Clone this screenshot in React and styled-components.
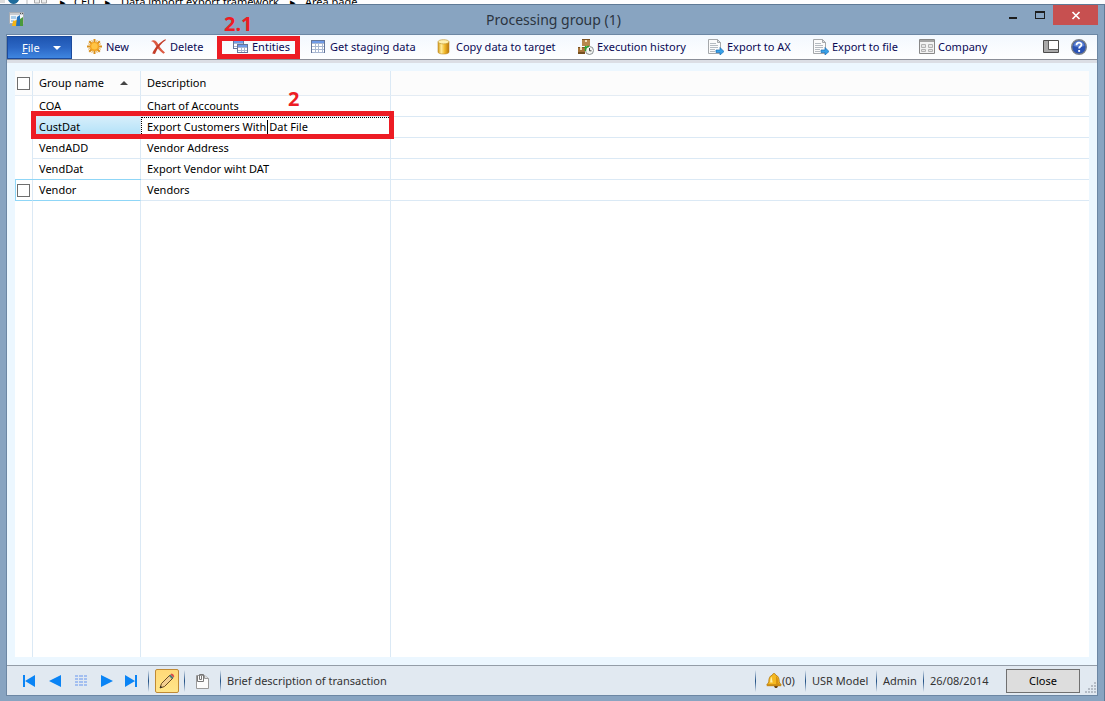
import React from "react";
import styled, { createGlobalStyle, css } from "styled-components";

const Global = createGlobalStyle`
  * { box-sizing: border-box; }
  body { margin: 0; background: #88a4c1; }
  body, button, input { font-family: "Noto Sans", "Open Sans", sans-serif; font-size: 11px; line-height: 16px; }
`;

const Page = styled.div`
  display: flex;
  flex-direction: column;
  min-height: 100vh;
`;

const Backdrop = styled.div`
  display: flex;
  align-items: flex-end;
  height: 4px;
  overflow: hidden;
  background: #fdfdfe;
  color: #000;
  white-space: nowrap;
`;
const Crumb = styled.span`
  flex: none;
  width: ${(p) => p.$w}px;
  height: 16px;
  margin-bottom: -6px;
`;
const BackIcons = styled.svg`
  flex: none;
  width: 60px;
  height: 4px;
`;

const Window = styled.div`
  display: flex;
  flex-direction: column;
  flex: 1;
  border-top: 1px solid #5f7a96;
  border-right: 1px solid #5f7a96;
  background: #88a4c1;
  padding: 0 6px 5px;
`;

const TitleBar = styled.header`
  position: relative;
  display: grid;
  grid-template-columns: 1fr auto 1fr;
  height: 29px;
  padding-left: 3px;
`;
const AppIcon = styled.svg`
  width: 16px;
  height: 16px;
  margin-top: 6px;
`;
const Title = styled.h1`
  margin: 0;
  font-size: 14px;
  line-height: 29px;
  font-weight: 400;
  color: #2b3440;
`;
const WindowButtons = styled.div`
  display: flex;
  justify-content: flex-end;
`;
const WindowButton = styled.button`
  display: flex;
  align-items: center;
  justify-content: center;
  width: ${(p) => (p.$close ? 45 : 27)}px;
  height: 20px;
  padding: 0;
  border: 0;
  background: ${(p) => (p.$close ? "#c75050" : "transparent")};
`;

const Client = styled.main`
  display: flex;
  flex-direction: column;
  flex: 1;
  border: 1px solid #6c87a4;
  background: #ecf7ff;
`;

const Toolbar = styled.nav`
  display: flex;
  align-items: center;
  height: 25px;
  padding-right: 10px;
  border-bottom: 1px solid #8b8f98;
  background: linear-gradient(#f3f8fe, #ffffff);
  box-shadow: 0 3px 0 #dbdee5;
`;
const FileButton = styled.button`
  display: flex;
  align-items: center;
  gap: 13px;
  align-self: stretch;
  width: 65px;
  margin: 1px 15px 0 0;
  padding: 0 0 0 14px;
  border: 1px solid #1b4a9c;
  background: linear-gradient(#1e55b0, #2b66c4 50%, #3f86e0);
  color: #fff;
  font-size: 11px;
`;
const ToolButton = styled.button`
  position: relative;
  display: flex;
  align-items: center;
  gap: 3px;
  flex: 0 0 auto;
  width: ${(p) => p.$w}px;
  height: 22px;
  padding: 0;
  border: 0;
  background: none;
  color: #0a0a55;
  white-space: nowrap;
`;
const ToolEnd = styled.div`
  display: flex;
  gap: 12px;
  margin-left: auto;
`;
const IconButton = styled.button`
  display: flex;
  width: 16px;
  height: 16px;
  padding: 0;
  border: 0;
  background: none;
`;
const Icon = styled.svg`
  flex: none;
  width: 16px;
  height: 16px;
`;

const Highlight = styled.span`
  position: absolute;
  border: 5px solid #ed1c24;
  pointer-events: none;
  ${(p) =>
    p.$row
      ? css`left: 16px; top: 40px; width: 363px; height: 28px;`
      : css`left: -16px; top: 0; width: 83px; height: 23px;`}
`;
const Callout = styled.span`
  position: absolute;
  left: ${(p) => p.$x}px;
  top: ${(p) => p.$y}px;
  color: #ed1c24;
  font-family: "Noto Sans", "Open Sans", sans-serif;
  font-size: 20px;
  line-height: 20px;
  font-weight: 700;
`;

const Grid = styled.section`
  position: relative;
  flex: 1;
  margin: 11px 8px 8px;
  background:
    linear-gradient(#dbe9f5, #dbe9f5) 17px 0 / 1px 100% no-repeat,
    linear-gradient(#dbe9f5, #dbe9f5) 125px 0 / 1px 100% no-repeat,
    linear-gradient(#dbe9f5, #dbe9f5) 375px 0 / 1px 100% no-repeat,
    #fff;
`;
const Table = styled.table`
  width: 100%;
  table-layout: fixed;
  border-collapse: separate;
  border-spacing: 0;
  color: #000;
`;
const Col = styled.col`
  width: ${(p) => p.$w}px;
`;
const Head = styled.th`
  height: 25px;
  padding: 0 0 0 ${(p) => (p.$tick ? 2 : 6)}px;
  border-bottom: 1px solid #e4ecf4;
  border-right: ${(p) => (p.$last ? "0" : "1px solid #dbe9f5")};
  background: #fcfcfc;
  font-weight: 400;
  text-align: left;
`;
const SortLabel = styled.span`
  display: flex;
  align-items: center;
  gap: 16px;
`;
const Cell = styled.td`
  height: 21px;
  padding: 0 0 0 ${(p) => (p.$tick ? (p.$current ? 1 : 2) : 6)}px;
  border-bottom: 1px solid ${(p) => (p.$current ? "#8fd6f7" : p.$tick ? "transparent" : "#dbe9f5")};
  border-right: ${(p) => (p.$last ? "0" : "1px solid #dbe9f5")};
  white-space: nowrap;
  ${(p) => p.$tick && p.$current && css`border-left: 1px solid #8fd6f7;`}
  ${(p) => p.$current && css`box-shadow: 0 -1px 0 #8fd6f7;`}
  ${(p) => p.$selected && css`background: linear-gradient(#d6eefb, #aee0f8);`}
  ${(p) => p.$editing && css`position: relative; outline: 1px dotted #000; outline-offset: -1px;`}
`;
const Tick = styled.input`
  appearance: none;
  display: block;
  width: 13px;
  height: 13px;
  margin: 0;
  border: 1px solid #6e6e6e;
  background: #fff;
`;
const CellInput = styled.input`
  display: block;
  width: 95%;
  height: 16px;
  padding: 0;
  border: 0;
  outline: 0;
  background: none;
  color: #000;
`;
const Caret = styled.span`
  position: absolute;
  left: 126px;
  top: 3px;
  width: 1px;
  height: 15px;
  background: #000;
`;

const StatusBar = styled.footer`
  display: flex;
  align-items: center;
  height: 30px;
  border-top: 1px solid #949da8;
  background: #e1e9f1;
  color: #333;
  white-space: nowrap;
`;
const Navigation = styled.div`
  display: flex;
  gap: 10px;
  width: 141px;
  padding-left: 14px;
`;
const Separator = styled.span`
  flex: none;
  width: 1px;
  height: 22px;
  background: linear-gradient(#e1e9f1, #1d4e84 50%, #e1e9f1);
`;
const EditButton = styled.button`
  display: flex;
  align-items: center;
  justify-content: center;
  width: 24px;
  height: 24px;
  margin: 0 5px 0 6px;
  padding: 0;
  border: 1px solid #c08a34;
  border-radius: 2px;
  background: linear-gradient(#ffd977, #ffe58a);
`;
const AttachButton = styled(IconButton)`
  margin: 0 10px 0 9px;
`;
const StatusText = styled.span`
  width: ${(p) => (p.$w ? p.$w + "px" : "auto")};
  flex: ${(p) => (p.$grow ? "1" : "none")};
  padding-left: 6px;
`;
const Alerts = styled.button`
  display: flex;
  align-items: center;
  width: 49px;
  padding: 0 0 0 10px;
  border: 0;
  background: none;
  color: #333;
`;
const CloseButton = styled.button`
  width: 74px;
  height: 24px;
  margin: 0 4px 0 0;
  padding: 0;
  border: 1px solid #707070;
  background: #dddddd;
  color: #000;
`;
const Grip = styled.svg`
  align-self: flex-end;
  width: 13px;
  height: 13px;
  margin-bottom: 1px;
`;

const NewIcon = () => (
  <Icon viewBox="0 0 16 16" aria-hidden="true">
    <path d="M7.500 0v15M0 7.500h15M2.200 2.200l10.600 10.600M12.800 2.200L2.200 12.800" stroke="#d9901c" strokeWidth="2" />
    <path d="M4.700 1l5.600 13M10.300 1L4.700 14M1 4.700l13 5.600M14 4.700L1 10.300" stroke="#e5a83f" strokeWidth=".8" />
    <circle cx="7.500" cy="7.500" r="4.600" fill="#f5a31f" />
    <circle cx="7.500" cy="7.300" r="3.200" fill="#ffc445" />
  </Icon>
);
const DeleteIcon = () => (
  <Icon viewBox="0 0 16 16" aria-hidden="true">
    <path d="M0 2.300C2 .4 4.500 1 6 3.300c2 3.500 4 7 8 10.200l-1.600 1.300C8.500 12 6 8.500 4 5.300 3 3.600 2 2.600 0 2.300z" fill="#dc5a42" />
    <path d="M15 1C10.500 4 6.500 8.500 4 15l-2.700-.6C4 8 9 2.800 14.500.2z" fill="#c43c28" />
  </Icon>
);
const TableShape = ({ x, y, w, h, rows, cols }) => (
  <g>
    <rect x={x + 0.5} y={y + 0.5} width={w - 1} height={h - 1} fill="#fff" stroke="#64759a" />
    <rect x={x + 1} y={y + 1} width={w - 2} height="2" fill="#6f9be8" />
    {Array.from({ length: cols - 1 }, (_, i) => (
      <rect key={"c" + i} x={x + Math.round(((i + 1) * w) / cols)} y={y + 3} width="1" height={h - 4} fill="#a9b8d2" />
    ))}
    {Array.from({ length: rows }, (_, i) => (
      <rect key={"r" + i} x={x + 1} y={y + 3 + i * 3} width={w - 2} height="1" fill="#a9b8d2" />
    ))}
  </g>
);
const EntitiesIcon = () => (
  <Icon viewBox="0 0 16 16" aria-hidden="true">
    <TableShape x={0} y={1} w={11} h={9} rows={2} cols={3} />
    <TableShape x={4} y={5} w={11} h={9} rows={2} cols={3} />
  </Icon>
);
const StagingIcon = () => (
  <Icon viewBox="0 0 16 16" aria-hidden="true">
    <TableShape x={0} y={1} w={14} h={13} rows={4} cols={4} />
  </Icon>
);
const CylinderIcon = () => (
  <Icon viewBox="0 0 16 16" aria-hidden="true">
    <defs>
      <linearGradient id="gold">
        <stop offset="0" stopColor="#d39a16" />
        <stop offset=".3" stopColor="#ffec9b" />
        <stop offset=".6" stopColor="#f2bb2c" />
        <stop offset="1" stopColor="#b87508" />
      </linearGradient>
    </defs>
    <path d="M1 3v10c0 1.400 2.500 2 5.500 2s5.500-.6 5.500-2V3z" fill="url(#gold)" stroke="#c08a28" strokeWidth=".6" />
    <ellipse cx="6.500" cy="2.800" rx="5.500" ry="2.100" fill="#fff1b0" stroke="#c39a34" strokeWidth=".7" />
  </Icon>
);
const HistoryIcon = () => (
  <Icon viewBox="0 0 16 16" aria-hidden="true">
    <rect x="4" y="0" width="8" height="7" fill="#b8884c" />
    <rect x="7" y="0" width="2" height="3" fill="#f2dfbc" />
    <path d="M0 8h7v7H0z" fill="#a87538" />
    <path d="M0 8h7v1H0zM4 0h8v1H4z" fill="#7b5222" />
    <rect x="2" y="8" width="2" height="3" fill="#f2dfbc" />
    <path d="M0 13h7v2H0z" fill="#76501f" />
    <circle cx="11.500" cy="11.500" r="4" fill="#f3f6f3" stroke="#888e90" />
    <path d="M11.500 9v2.800h2" fill="none" stroke="#444" />
    <path d="M7.500 12c-.5-3 1-4.500 3.500-4.700" fill="none" stroke="#2ba52c" strokeWidth="1.500" />
    <path d="M6 9h3.500L7.600 6.500z" fill="#2ba52c" />
  </Icon>
);
const ExportIcon = () => (
  <Icon viewBox="0 0 16 16" aria-hidden="true">
    <path d="M.5.5h9l3 3v11H.5z" fill="#fbfbfb" stroke="#a5a8ab" />
    <path d="M9.500.5v3h3z" fill="#dfe2e5" stroke="#a5a8ab" />
    <path d="M2 4.500h6M2 6.500h8M2 8.500h8M2 10.500h5M2 12.500h5" stroke="#b5bbc1" />
    <path d="M8 11h4V8.500l4 4-4 3.500v-2.500H8z" fill="#37a1e8" stroke="#1a6db4" strokeWidth=".7" />
  </Icon>
);
const CompanyIcon = () => (
  <Icon viewBox="0 0 16 16" aria-hidden="true">
    <path d="M.5.5h15v14H.5z" fill="#f3f3f3" stroke="#888" />
    <path d="M1 1h14v2H1z" fill="#a5a5a5" />
    <path d="M2.500 5.500h4v3h-4zM9.500 5.500h4v3h-4zM2.500 10.500h4v2h-4zM9.500 10.500h4v2h-4z" fill="#e6e6e6" stroke="#b2b2b2" />
  </Icon>
);
const LayoutIcon = () => (
  <Icon viewBox="0 0 16 16" aria-hidden="true">
    <path d="M.5 1.500h15v12H.5z" fill="#fff" stroke="#4c4c4c" />
    <path d="M1 2h4v11H1zM1 10h14v3H1z" fill="#a9a9a9" />
    <path d="M5.500 2v8.500H15" fill="none" stroke="#5b5b5b" />
  </Icon>
);
const HelpIcon = () => (
  <Icon viewBox="0 0 16 16" aria-hidden="true">
    <circle cx="8" cy="8" r="7.300" fill="#2a52b4" stroke="#7c8087" strokeWidth="1.400" />
    <path d="M2.500 7a5.500 5 0 0 1 11 0q-5.500 2-11 0z" fill="#5b80d3" />
    <path d="M5.500 6.200c0-3.600 5-3.200 5-.5 0 1.800-2.400 1.900-2.400 3.900" fill="none" stroke="#fff" strokeWidth="1.800" />
    <rect x="7.200" y="11" width="1.900" height="1.900" fill="#fff" />
  </Icon>
);
const BellIcon = () => (
  <Icon viewBox="0 0 16 16" aria-hidden="true">
    <path d="M8 .5c1 0 1.500.6 1.500 1.500 3 .8 3.700 3.500 3.700 7l2 3H.8l2-3c0-3.500.7-6.200 3.700-7C6.500 1.100 7 .5 8 .5z" fill="#f5b921" stroke="#b4780f" strokeWidth=".8" />
    <path d="M5.500 3.800C4.500 5 4.400 7 4.200 9.500h2.500z" fill="#fff0a4" />
    <path d="M10 3c2 1.500 2 4 2.200 6.500l1.600 2H10z" fill="#d9930f" />
    <path d="M.8 11.500h14.400v1.700H.8z" fill="#c98a14" />
    <path d="M8 13h4l-1 2H9z" fill="#6e4510" />
  </Icon>
);

const tools = [
  ["New", NewIcon, 64],
  ["Delete", DeleteIcon, 82],
  ["Entities", EntitiesIcon, 78],
  ["Get staging data", StagingIcon, 126],
  ["Copy data to target", CylinderIcon, 141],
  ["Execution history", HistoryIcon, 130],
  ["Export to AX", ExportIcon, 105],
  ["Export to file", ExportIcon, 106],
  ["Company", CompanyIcon, 80],
];

const groups = [
  { name: "COA", description: "Chart of Accounts" },
  { name: "CustDat", description: "Export Customers With Dat File", selected: true },
  { name: "VendADD", description: "Vendor Address" },
  { name: "VendDat", description: "Export Vendor wiht DAT" },
  { name: "Vendor", description: "Vendors", current: true },
];

const navIcons = [
  ["First record", <path key="p" d="M2 2h2v12H2zM14 2v12L4 8z" fill="#0a84f5" />],
  ["Previous record", <path key="p" d="M14 2v12L2 8z" fill="#0a84f5" />],
  ["Grid view", <path key="p" d="M2 2h3v2H2zM6 2h4v2H6zM11 2h3v2h-3zM2 5h3v2H2zM6 5h4v2H6zM11 5h3v2h-3zM2 8h3v2H2zM6 8h4v2H6zM11 8h3v2h-3zM2 11h3v2H2zM6 11h4v2H6zM11 11h3v2h-3z" fill="#a3bff0" />],
  ["Next record", <path key="p" d="M2 2v12l12-6z" fill="#0a84f5" />],
  ["Last record", <path key="p" d="M10 2h2v12h-2zM0 2v12l10-6z" fill="#0a84f5" />],
];

export default function App() {
  return (
    <Page>
      <Global />
      <Backdrop aria-hidden="true">
        <BackIcons viewBox="0 0 60 4">
          <path d="M0 0h5v3H0z" fill="#ddd" />
          <path d="M8 0h11q-2 4-5.500 4T8 0z" fill="#1f6c9c" />
          <path d="M27 0v4" stroke="#bbb" />
          <path d="M34.500-2h5v5h-5zM41.500-2h5v5h-5z" fill="#eee" stroke="#aaa" />
        </BackIcons>
        <Crumb $w={14}>▸</Crumb>
        <Crumb $w={31}>CEU</Crumb>
        <Crumb $w={16}>▸</Crumb>
        <Crumb $w={169}>Data import export framework</Crumb>
        <Crumb $w={15}>▸</Crumb>
        <Crumb $w={60}>Area page</Crumb>
      </Backdrop>
      <Window>
        <TitleBar>
          <AppIcon viewBox="0 0 16 16" aria-hidden="true">
            <path d="M.5 1.500h14v11H.5z" fill="#f4f6f8" stroke="#a7adb4" />
            <path d="M1 2h13v2H1z" fill="#c9ccd0" />
            <path d="M11 2h1v1h-1zM13 2h1v1h-1z" fill="#555" />
            <path d="M2 5h5v3H2zM2 9h3v2H2z" fill="#a9cdea" />
            <path d="M4 10l4-1v6H3z" fill="#f5b313" />
            <path d="M8 6l3-2v11H7z" fill="#2372bd" />
            <path d="M11 8l3-2v9h-3z" fill="#4a9a3c" />
          </AppIcon>
          <Title>Processing group (1)</Title>
          <WindowButtons>
            <WindowButton aria-label="Minimize">
              <Icon viewBox="0 0 16 16"><path d="M4 10h8v2H4z" fill="#1d1d1d" /></Icon>
            </WindowButton>
            <WindowButton aria-label="Maximize">
              <Icon viewBox="0 0 16 16"><path d="M3 4h10v8H3zM4 6v5h8V6z" fillRule="evenodd" fill="#1d1d1d" /></Icon>
            </WindowButton>
            <WindowButton $close aria-label="Close window">
              <Icon viewBox="0 0 16 16"><path d="M4.500 5l7 7M11.500 5l-7 7" stroke="#fff" strokeWidth="1.700" /></Icon>
            </WindowButton>
          </WindowButtons>
          <Callout $x={218} $y={9}>2.1</Callout>
        </TitleBar>
        <Client>
          <Toolbar>
            <FileButton>
              <span><u>F</u>ile</span>
              <svg width="8" height="4" viewBox="0 0 8 4" aria-hidden="true"><path d="M0 0h8L4 4z" fill="#fff" /></svg>
            </FileButton>
            {tools.map(([label, Glyph, width]) => (
              <ToolButton key={label} $w={width}>
                <Glyph />
                {label}
                {label === "Entities" && <Highlight />}
              </ToolButton>
            ))}
            <ToolEnd>
              <IconButton aria-label="Layout"><LayoutIcon /></IconButton>
              <IconButton aria-label="Help"><HelpIcon /></IconButton>
            </ToolEnd>
          </Toolbar>
          <Grid>
            <Table>
              <colgroup>
                <Col $w={18} />
                <Col $w={108} />
                <Col $w={250} />
                <col />
              </colgroup>
              <thead>
                <tr>
                  <Head $tick><Tick type="checkbox" aria-label="Select all" /></Head>
                  <Head>
                    <SortLabel>
                      Group name
                      <svg width="8" height="4" viewBox="0 0 8 4" aria-hidden="true"><path d="M0 4h8L4 0z" fill="#444" /></svg>
                    </SortLabel>
                  </Head>
                  <Head>Description</Head>
                  <Head $last />
                </tr>
              </thead>
              <tbody>
                {groups.map((g) => (
                  <tr key={g.name}>
                    <Cell $tick $current={g.current}>
                      {g.current && <Tick type="checkbox" aria-label={"Select " + g.name} />}
                    </Cell>
                    <Cell $selected={g.selected} $current={g.current}>{g.name}</Cell>
                    <Cell $editing={g.selected}>
                      {g.selected ? (
                        <>
                          <CellInput aria-label="Description" defaultValue={g.description} />
                          <Caret />
                        </>
                      ) : (
                        g.description
                      )}
                    </Cell>
                    <Cell $last />
                  </tr>
                ))}
              </tbody>
            </Table>
            <Highlight $row />
            <Callout $x={273} $y={18}>2</Callout>
          </Grid>
          <StatusBar>
            <Navigation>
              {navIcons.map(([label, shape]) => (
                <IconButton key={label} aria-label={label}>
                  <Icon viewBox="0 0 16 16">{shape}</Icon>
                </IconButton>
              ))}
            </Navigation>
            <Separator />
            <EditButton aria-label="Edit">
              <Icon viewBox="0 0 16 16">
                <path d="M1 15l1.500-4.500L11 2l3 3-8.500 8.500z" fill="#f2cf91" stroke="#6a4a22" />
                <path d="M10 3l3 3 1.500-1.500-3-3z" fill="#4e7f78" />
                <path d="M11.500 1.500l1-1q2 0 2.800 2.700l-.8 1.300z" fill="#d94a4a" />
                <path d="M1 15l.7-2.300 1.600 1.600z" fill="#222" />
              </Icon>
            </EditButton>
            <Separator />
            <AttachButton aria-label="Attachments">
              <Icon viewBox="0 0 16 16">
                <path d="M2.500 2.500h8l4 3v10h-12z" fill="#fcfcfc" stroke="#9a9a9a" />
                <path d="M10.500 2.500v3h4" fill="#e2e2e2" stroke="#9a9a9a" />
                <path d="M3.500 3v5.500h6v-7h-4v5h2V3" fill="none" stroke="#777" />
              </Icon>
            </AttachButton>
            <Separator />
            <StatusText $grow>Brief description of transaction</StatusText>
            <Separator />
            <Alerts aria-label="Alerts"><BellIcon />(0)</Alerts>
            <Separator />
            <StatusText $w={70}>USR Model</StatusText>
            <Separator />
            <StatusText $w={46}>Admin</StatusText>
            <Separator />
            <StatusText $w={82}>26/08/2014</StatusText>
            <CloseButton>Close</CloseButton>
            <Grip viewBox="0 0 13 13" aria-hidden="true">
              <path d="M10 1h2v2h-2zM7 4h2v2H7zM10 4h2v2h-2zM4 7h2v2H4zM7 7h2v2H7zM10 7h2v2h-2zM1 10h2v2H1zM4 10h2v2H4zM7 10h2v2H7zM10 10h2v2h-2z" fill="#b4bcc6" />
            </Grip>
          </StatusBar>
        </Client>
      </Window>
    </Page>
  );
}
